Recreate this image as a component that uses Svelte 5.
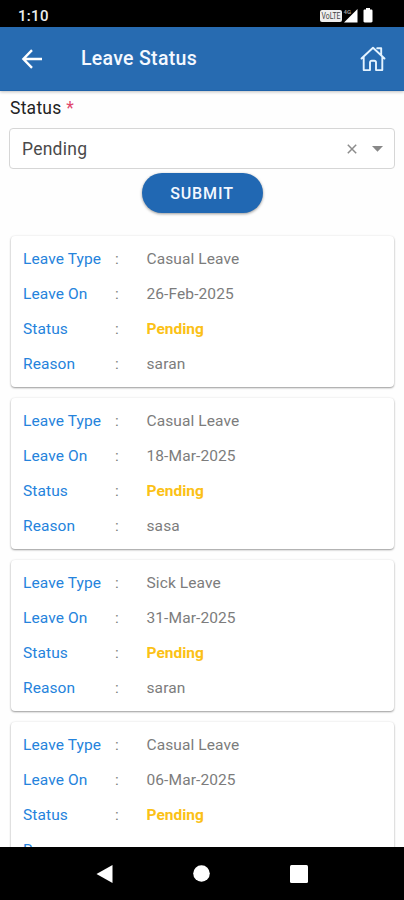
<script lang="ts">
    const leaves = [
        { type: 'Casual Leave', date: '26-Feb-2025', status: 'Pending', reason: 'saran' },
        { type: 'Casual Leave', date: '18-Mar-2025', status: 'Pending', reason: 'sasa' },
        { type: 'Sick Leave', date: '31-Mar-2025', status: 'Pending', reason: 'saran' },
        { type: 'Casual Leave', date: '06-Mar-2025', status: 'Pending', reason: 'saran' }
    ];

    let selected = $state('Pending');
</script>

<div class="screen">
    <div class="statusbar">
        <span class="time">1:10</span>
        <svg class="indicators" width="56" height="18" viewBox="0 0 56 18">
            <rect x="0" y="3" width="22" height="12" rx="2" fill="#eee" />
            <text x="11" y="12.3" text-anchor="middle" font-size="9" textLength="19" lengthAdjust="spacingAndGlyphs" fill="#444">VoLTE</text>
            <text x="23.5" y="7" font-size="6" font-weight="700" fill="#999">4G</text>
            <path d="M37.5 2v13.5H24z" fill="#fff" />
            <path d="M46 1h4v1.5h1.2c.8 0 1.3.5 1.3 1.2v10.6c0 .7-.5 1.2-1.3 1.2h-6.5c-.7 0-1.2-.5-1.2-1.2V3.7c0-.7.5-1.2 1.2-1.2H46z" fill="#fff" />
        </svg>
    </div>

    <header>
        <button class="icon" aria-label="Back">
            <svg width="22" height="20" viewBox="0 0 22 20" fill="none" stroke="#fff" stroke-width="2.4">
                <path d="M11 1.2 2.4 10l8.6 8.8M2.4 10H21" />
            </svg>
        </button>
        <h1>Leave Status</h1>
        <button class="icon" aria-label="Home">
            <svg width="26" height="26" viewBox="0 0 26 26" fill="none" stroke="#e4f3ff" stroke-width="1.9" stroke-linejoin="round" stroke-linecap="round">
                <path d="M1.5 12.5 13 1.8l11.5 10.7M3.7 11v13.1H10v-7.6c0-1.1.7-1.8 1.8-1.8h2.4c1.1 0 1.8.7 1.8 1.8v7.6h6.3V11M17.2 2.2h4v6.8" />
            </svg>
        </button>
    </header>

    <main>
        <div class="label">Status <span class="required">*</span></div>
        <div class="select">
            <span class="value">{selected}</span>
            <button class="icon clear" aria-label="Clear" onclick={() => (selected = '')}>
                <svg width="10" height="10" viewBox="0 0 10 10" stroke="#8c8c8c" stroke-width="1.5">
                    <path d="M.8.8l8.4 8.4M9.2.8.8 9.2" />
                </svg>
            </button>
            <svg width="11" height="6" viewBox="0 0 11 6"><path d="M0 0h11L5.5 5.8z" fill="#888" /></svg>
        </div>
        <button class="submit">SUBMIT</button>

        <div class="list">
            {#each leaves as leave}
                <div class="card">
                    <div class="row"><span class="key">Leave Type</span><span>:</span><span>{leave.type}</span></div>
                    <div class="row"><span class="key">Leave On</span><span>:</span><span>{leave.date}</span></div>
                    <div class="row"><span class="key">Status</span><span>:</span><span class="pending">{leave.status}</span></div>
                    <div class="row"><span class="key">Reason</span><span>:</span><span>{leave.reason}</span></div>
                </div>
            {/each}
        </div>
    </main>

    <nav>
        <svg width="17" height="20" viewBox="0 0 17 20"><path d="M16.5 1v18L.5 10z" fill="#fff" /></svg>
        <svg width="17" height="17" viewBox="0 0 17 17"><circle cx="8.5" cy="8.5" r="8.3" fill="#fff" /></svg>
        <svg width="18" height="18" viewBox="0 0 18 18"><rect width="18" height="18" rx="1.5" fill="#fff" /></svg>
    </nav>
</div>

<style>
    :global(body) {
        margin: 0;
        overflow: hidden;
    }

    .screen {
        height: 100vh;
        display: flex;
        flex-direction: column;
        overflow: hidden;
        background-color: #fefefe;
        font-family: Roboto, "Liberation Sans", sans-serif;
    }

    .statusbar {
        flex: none;
        height: 27px;
        box-sizing: border-box;
        padding: 4px 28px 0 18px;
        display: flex;
        justify-content: space-between;
        align-items: center;
        background-color: #000;
        color: #eee;
    }

    .time {
        font-size: 15px;
        font-weight: 500;
        letter-spacing: 0.3px;
    }

    .indicators {
        margin-top: 1px;
    }

    .icon {
        display: flex;
        padding: 0;
        border: 0;
        background: none;
    }

    header {
        flex: none;
        height: 64px;
        box-sizing: border-box;
        padding: 0 18px 0 21px;
        display: flex;
        align-items: center;
        background-color: #276bb1;
        border-bottom: 1px solid #1f62a9;
        box-shadow: 0 1px 3px rgba(0, 0, 0, 0.25);
        z-index: 1;
    }

    h1 {
        flex: 1;
        margin: 0 0 0 38px;
        font-size: 19.5px;
        font-weight: 500;
        letter-spacing: 0.3px;
        color: #f4f8ff;
    }

    main {
        flex: 1;
        min-height: 0;
        overflow: hidden;
        padding: 5px 9px 0;
        display: flex;
        flex-direction: column;
    }

    .label {
        height: 24px;
        padding-left: 1px;
        line-height: 24px;
        font-size: 17.5px;
        letter-spacing: 0.25px;
        color: #222;
    }

    .required {
        color: #e0466b;
    }

    .select {
        flex: none;
        height: 41px;
        box-sizing: border-box;
        margin: 8px 0 0;
        padding: 0 11px 0 12px;
        display: flex;
        align-items: center;
        border: 1px solid #d6d6d6;
        border-radius: 4px;
        background-color: #fff;
    }

    .value {
        flex: 1;
        font-size: 17.5px;
        letter-spacing: 0.25px;
        color: #4a4a4a;
    }

    .clear {
        margin-right: 15px;
    }

    .submit {
        flex: none;
        align-self: center;
        width: 121px;
        height: 40px;
        margin-top: 4px;
        padding: 0;
        border: 0;
        border-radius: 20px;
        background-color: #2168b3;
        box-shadow: 0 1px 3px rgba(0, 0, 0, 0.4);
        color: #f4f8ff;
        font-family: inherit;
        font-size: 16px;
        font-weight: 500;
        letter-spacing: 0.9px;
    }

    .list {
        padding: 23px 1px 0 2px;
        display: flex;
        flex-direction: column;
        gap: 11px;
    }

    .card {
        flex: none;
        height: 151px;
        box-sizing: border-box;
        padding: 5px 12px 0;
        border-radius: 4px;
        background-color: #fff;
        box-shadow: 0 1px 2px rgba(0, 0, 0, 0.38), 0 0 3px rgba(0, 0, 0, 0.06);
    }

    .row {
        height: 35px;
        display: grid;
        grid-template-columns: 92px 31.5px 1fr;
        align-items: center;
        font-size: 15.5px;
        letter-spacing: 0.1px;
        color: #7c7c7c;
    }

    .key {
        color: #2583dc;
    }

    .pending {
        font-weight: 700;
        letter-spacing: 0;
        color: #fbc116;
    }

    nav {
        flex: none;
        height: 53px;
        box-sizing: border-box;
        padding: 0 96px;
        display: flex;
        justify-content: space-between;
        align-items: center;
        background-color: #000;
        z-index: 1;
    }
</style>
